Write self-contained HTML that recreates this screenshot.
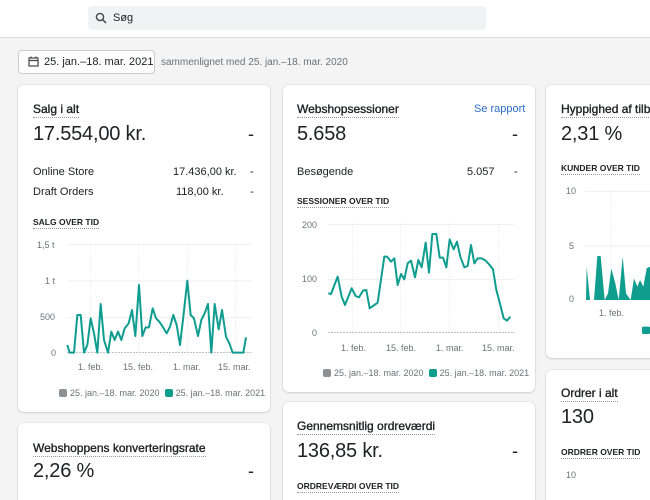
<!DOCTYPE html><html><head><meta charset="utf-8"><style>
*{margin:0;padding:0;box-sizing:border-box}
html,body{width:650px;height:500px;overflow:hidden}
body{background:#f4f4f5;font-family:"Liberation Sans",sans-serif;color:#202223}
#w{position:relative;width:650px;height:500px;overflow:hidden}
.a{position:absolute;white-space:nowrap}
.top{position:absolute;left:0;top:0;width:650px;height:38px;background:#fff;border-bottom:1px solid #dcdcdc}
.search{position:absolute;left:88px;top:6px;width:398px;height:24px;background:#f1f2f3;border-radius:4px}
.card{position:absolute;background:#fff;border-radius:6px;box-shadow:0 0 0 1px rgba(0,0,0,.04),0 1px 2px rgba(0,0,0,.12)}
.t{font-size:12px;-webkit-text-stroke:0.35px #202223;border-bottom:1px dotted #999;padding-bottom:1px}
.v{font-size:20px;letter-spacing:-0.2px}
.s{font-size:8.5px;font-weight:bold;border-bottom:1px dotted #999;padding-bottom:1px}
.r{font-size:11px}
.ax{font-size:9px;color:#6d7175}
.lg{font-size:9px;color:#6d7175}
.sq{display:inline-block;width:8px;height:8px;border-radius:2px;vertical-align:-1px;margin-right:3px}
</style></head><body><div id="w">
<div class="top"><div class="search"></div>
<svg class="a" style="left:95px;top:12px" width="12" height="12" viewBox="0 0 12 12"><circle cx="5" cy="5" r="3.6" fill="none" stroke="#444" stroke-width="1.4"/><path d="M7.6 7.6L11 11" stroke="#444" stroke-width="1.5"/></svg>
<div class="a" style="left:113px;top:12px;font-size:11px">Søg</div></div>

<div class="a" style="left:18px;top:50px;width:137px;height:24px;background:#fff;border:1px solid #c9cccf;border-radius:4px"></div>
<svg class="a" style="left:28px;top:56px" width="11" height="11" viewBox="0 0 11 11"><rect x="1" y="2" width="9" height="8" fill="none" stroke="#444" stroke-width="1.2"/><path d="M1 4.5h9M3 0.5v2M8 0.5v2" stroke="#444" stroke-width="1.2"/></svg>
<div class="a" style="left:44px;top:56px;font-size:11px">25. jan.–18. mar. 2021</div>
<div class="a" style="left:161px;top:57px;font-size:10px;color:#6d7175">sammenlignet med 25. jan.–18. mar. 2020</div>

<div class="card" style="left:18px;top:85px;width:252px;height:327px"></div>
<div class="a t" style="left:33px;top:102px">Salg i alt</div>
<div class="a v" style="left:33px;top:123px">17.554,00 kr.</div>
<div class="a" style="left:248px;top:124px;font-size:18px">-</div>
<div class="a r" style="left:33px;top:166px">Online Store</div><div class="a r" style="left:173px;top:166px">17.436,00 kr.</div><div class="a r" style="left:250px;top:166px">-</div>
<div class="a r" style="left:33px;top:186px">Draft Orders</div><div class="a r" style="left:176px;top:186px">118,00 kr.</div><div class="a r" style="left:250px;top:186px">-</div>
<div class="a s" style="left:33px;top:217px">SALG OVER TID</div>
<svg class="a" style="left:18px;top:210px" width="260" height="200" viewBox="0 0 780 600">
<g stroke="#e8e9eb" stroke-width="2"><path d="M148 103H700M148 213H700M148 323H700"/></g>
<g stroke="#e4e5e7" stroke-width="2" stroke-dasharray="5 5"><path d="M218 100V428M362 100V428M508 100V428M652 100V428"/></g>
<path d="M148 428H700" stroke="#6d7175" stroke-width="2" stroke-dasharray="4 5"/>
<polyline fill="none" stroke="#0f9d90" stroke-width="6" stroke-linejoin="round" points="148,405 155,428 168,428 178,315 188,315 198,428 208,405 218,325 228,370 238,428 248,282 258,390 270,428 280,365 290,390 300,365 310,390 320,355 332,340 342,300 352,378 363,225 373,378 383,352 393,352 404,295 414,325 424,335 434,350 446,370 456,350 466,315 476,345 486,405 496,320 508,212 518,315 528,325 540,378 550,330 560,310 570,282 580,428 590,282 602,358 612,300 624,380 634,400 644,428 676,428 684,382"/>
</svg>
<div class="a ax" style="left:37px;top:240px">1,5 t</div><div class="a ax" style="left:45px;top:276px">1 t</div><div class="a ax" style="left:40px;top:312px">500</div><div class="a ax" style="left:51px;top:348px">0</div>
<div class="a ax" style="left:78px;top:362px">1. feb.</div><div class="a ax" style="left:123px;top:362px">15. feb.</div><div class="a ax" style="left:173px;top:362px">1. mar.</div><div class="a ax" style="left:218px;top:362px">15. mar.</div>
<div class="a lg" style="left:59px;top:388px"><span class="sq" style="background:#8c9196"></span>25. jan.–18. mar. 2020 &nbsp;<span class="sq" style="background:#0f9d90"></span>25. jan.–18. mar. 2021</div>

<div class="card" style="left:283px;top:85px;width:252px;height:307px"></div>
<div class="a t" style="left:297px;top:102px">Webshopsessioner</div>
<div class="a" style="left:474px;top:103px;font-size:11px;color:#2c6ecb">Se rapport</div>
<div class="a v" style="left:297px;top:123px">5.658</div>
<div class="a" style="left:512px;top:124px;font-size:18px">-</div>
<div class="a r" style="left:297px;top:166px">Besøgende</div><div class="a r" style="left:467px;top:166px">5.057</div><div class="a r" style="left:514px;top:166px">-</div>
<div class="a s" style="left:297px;top:196px">SESSIONER OVER TID</div>
<svg class="a" style="left:285px;top:190px" width="250" height="200" viewBox="0 0 750 600">
<g stroke="#e8e9eb" stroke-width="2"><path d="M130 103H690M130 268H690"/></g>
<g stroke="#e4e5e7" stroke-width="2" stroke-dasharray="5 5"><path d="M203 100V428M347 100V428M493 100V428M640 100V428"/></g>
<path d="M130 428H690" stroke="#6d7175" stroke-width="2" stroke-dasharray="4 5"/>
<polyline fill="none" stroke="#0f9d90" stroke-width="6" stroke-linejoin="round" points="130,310 138,312 158,260 170,320 180,345 200,295 212,318 222,322 234,302 244,300 254,355 268,345 278,338 298,200 306,200 318,215 328,205 338,285 348,252 358,268 368,220 378,212 390,262 400,210 410,232 422,158 432,248 442,132 454,132 464,203 474,203 484,232 494,148 506,178 516,155 526,200 538,232 548,228 558,165 568,220 578,205 590,205 602,212 614,225 624,238 634,300 646,345 656,385 666,392 676,380"/>
</svg>
<div class="a ax" style="left:302px;top:220px">200</div><div class="a ax" style="left:302px;top:274px">100</div><div class="a ax" style="left:312px;top:328px">0</div>
<div class="a ax" style="left:341px;top:343px">1. feb.</div><div class="a ax" style="left:386px;top:343px">15. feb.</div><div class="a ax" style="left:436px;top:343px">1. mar.</div><div class="a ax" style="left:482px;top:343px">15. mar.</div>
<div class="a lg" style="left:323px;top:368px"><span class="sq" style="background:#8c9196"></span>25. jan.–18. mar. 2020 &nbsp;<span class="sq" style="background:#0f9d90"></span>25. jan.–18. mar. 2021</div>

<div class="card" style="left:546px;top:85px;width:110px;height:273px"></div>
<div class="a t" style="left:561px;top:102px">Hyppighed af tilbagevendende</div>
<div class="a v" style="left:561px;top:123px">2,31 %</div>
<div class="a s" style="left:561px;top:163px">KUNDER OVER TID</div>
<svg class="a" style="left:540px;top:80px" width="110" height="420" viewBox="0 0 330 1260">
<g stroke="#e8e9eb" stroke-width="2"><path d="M135 335H330M135 498H330"/></g>
<path d="M213 330V660" stroke="#e4e5e7" stroke-width="2" stroke-dasharray="5 5"/>
<polygon fill="#0f9d90" points="138,660 140,560 150,660 162,660 172,528 182,528 194,660 204,640 214,565 226,610 236,660 248,530 258,640 272,660 282,595 292,620 300,600 310,620 320,565 330,560 330,660"/>
<rect x="306" y="740" width="24" height="22" rx="4" fill="#0f9d90"/>
</svg>
<div class="a ax" style="left:566px;top:186px">10</div><div class="a ax" style="left:569px;top:241px">5</div><div class="a ax" style="left:569px;top:294px">0</div>
<div class="a ax" style="left:599px;top:308px">1. feb.</div>

<div class="card" style="left:18px;top:423px;width:252px;height:100px"></div>
<div class="a t" style="left:33px;top:441px">Webshoppens konverteringsrate</div>
<div class="a v" style="left:33px;top:460px">2,26 %</div>
<div class="a" style="left:248px;top:461px;font-size:18px">-</div>

<div class="card" style="left:283px;top:402px;width:252px;height:120px"></div>
<div class="a t" style="left:297px;top:419px">Gennemsnitlig ordreværdi</div>
<div class="a v" style="left:297px;top:440px">136,85 kr.</div>
<div class="a" style="left:512px;top:441px;font-size:18px">-</div>
<div class="a s" style="left:297px;top:481px">ORDREVÆRDI OVER TID</div>

<div class="card" style="left:546px;top:370px;width:110px;height:150px"></div>
<div class="a t" style="left:561px;top:386px">Ordrer i alt</div>
<div class="a v" style="left:561px;top:406px">130</div>
<div class="a s" style="left:561px;top:447px">ORDRER OVER TID</div>
<div class="a ax" style="left:566px;top:470px">10</div>
</div></body></html>
